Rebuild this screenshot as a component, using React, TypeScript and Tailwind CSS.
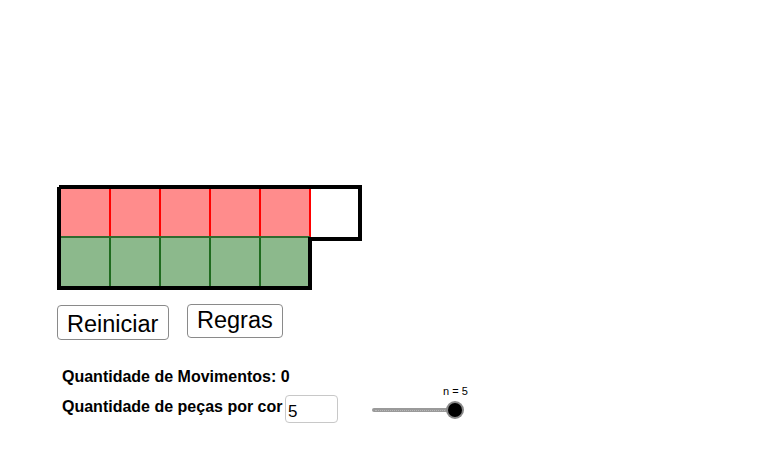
import React from "react";

function Board() {
  const cols = [0, 1, 2, 3, 4];
  return (
    <svg width={310} height={110} viewBox="0 0 310 110" className="block">
      {cols.map((i) => (
        <rect key={"p" + i} x={5 + 50 * i} y={4} width={50} height={50} fill="#ff8c8c" />
      ))}
      {cols.map((i) => (
        <rect key={"g" + i} x={5 + 50 * i} y={54} width={50} height={50} fill="#8cb98c" />
      ))}
      {[55, 105, 155, 205, 255].map((x) => (
        <line key={"r" + x} x1={x} y1={4} x2={x} y2={54} stroke="#ff0000" strokeWidth={2} />
      ))}
      {[55, 105, 155, 205].map((x) => (
        <line key={"d" + x} x1={x} y1={54} x2={x} y2={104} stroke="#1f6b1f" strokeWidth={2} />
      ))}
      <line x1={5} y1={54} x2={255} y2={54} stroke="#2f6b2f" strokeWidth={2} />
      <polyline
        points="4,4 305,4 305,56 255,56 255,105 4,105 4,4"
        fill="none"
        stroke="#000"
        strokeWidth={4}
        strokeLinejoin="miter"
      />
    </svg>
  );
}

function Slider() {
  return (
    <div className="relative ml-[34px] w-[92px] h-[28px]">
      <div className="absolute left-[71px] top-[-10px] text-[11px] leading-[13px] text-black whitespace-nowrap">
        n = 5
      </div>
      <div className="mt-[13px] h-[4px] w-[84px] rounded-full bg-[#9a9a9a] flex items-center px-[3px]">
        <div className="w-full h-0 border-t border-dotted border-[#b8b8b8]" />
      </div>
      <div className="absolute left-[74px] top-[6px] w-[18px] h-[18px] rounded-full bg-[#8a8a8a] flex items-center justify-center">
        <div className="w-[14px] h-[14px] rounded-full bg-black" />
      </div>
    </div>
  );
}

export default function App() {
  return (
    <div className="w-[775px] h-[474px] bg-white overflow-hidden font-['Liberation_Sans',Arial,sans-serif] text-black">
      <div className="pt-[183px] pl-[55px]">
        <Board />
      </div>
      <div className="flex items-start pl-[57px] mt-[11px]">
        <button className="mt-[1px] w-[112px] h-[35px] border border-[#8a8a8a] rounded-[4px] bg-white text-left pl-[9px] pt-[5px] text-[23.5px] leading-[26px] self-start flex items-start">
          Reiniciar
        </button>
        <button className="ml-[18px] w-[96px] h-[34px] border border-[#8a8a8a] rounded-[4px] bg-white text-left pl-[9px] pt-[2px] text-[23.5px] leading-[26px] flex items-start">
          Regras
        </button>
      </div>
      <div className="pl-[62px] mt-[28px] text-[16px] font-bold leading-[18px]">
        Quantidade de Movimentos: 0
      </div>
      <div className="flex items-start pl-[62px] mt-[9px]">
        <div className="w-[223px] mt-[3px] text-[16px] font-bold leading-[18px] whitespace-nowrap">
          Quantidade de peças por cor
        </div>
        <div className="w-[53px] h-[28px] border border-[#c8c8c8] rounded-[4px] pl-[2px] pt-[6px] text-[17px] leading-[19px]">
          5
        </div>
        <Slider />
      </div>
    </div>
  );
}
